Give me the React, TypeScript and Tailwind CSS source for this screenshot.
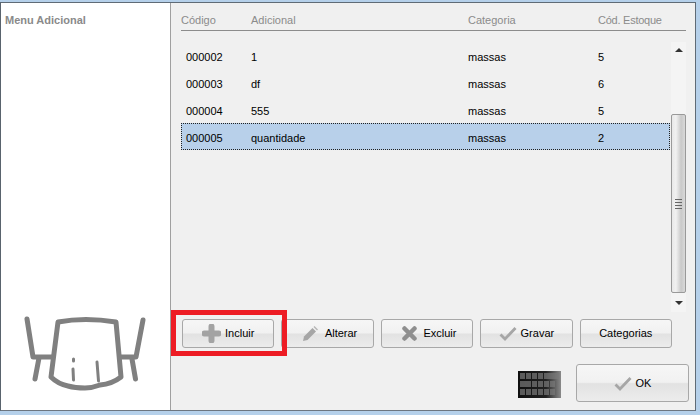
const rows = [
  { code: "000002", name: "1", cat: "massas", stock: "5" },
  { code: "000003", name: "df", cat: "massas", stock: "6" },
  { code: "000004", name: "555", cat: "massas", stock: "5" },
  { code: "000005", name: "quantidade", cat: "massas", stock: "2", selected: true },
];

const cols = "grid grid-cols-[70px_217px_130px_1fr] items-center";
const btn =
  "flex items-center justify-center h-[29px] w-[92.4px] rounded-[3px] border border-[#a8a8a8] text-[11px] text-black bg-[linear-gradient(to_bottom,#f6f6f6_0%,#f1f1f1_48%,#e2e2e2_52%,#ececec_100%)]";

function PlusIcon() {
  return (
    <svg width="19" height="19" viewBox="0 0 19 19" className="mr-[4px]">
      <path d="M9.500 2.500v14M2.500 9.500h14" stroke="#a3a3a3" strokeWidth="6" strokeLinecap="round" />
    </svg>
  );
}

function PencilIcon() {
  return (
    <svg width="16" height="16" viewBox="0 0 16 16" className="mr-[7px]">
      <path d="M1 15l1-4.500 8.500-8.500 3.500 3.500-8.500 8.500z" fill="#a6a6a6" />
      <path d="M11.500 1l1-1 3.500 3.500-1 1z" fill="#b5b5b5" />
    </svg>
  );
}

function CrossIcon() {
  return (
    <svg width="15" height="15" viewBox="0 0 15 15" className="mr-[6px]">
      <path d="M2.500 2.500l10 10M12.500 2.500l-10 10" stroke="#8f8f8f" strokeWidth="4.500" strokeLinecap="round" />
    </svg>
  );
}

function CheckIcon() {
  return (
    <svg width="18" height="15" viewBox="0 0 18 15" className="mr-[4px]">
      <path d="M1.500 8.500l4.500 4.500 10.500-11" fill="none" stroke="#a6a6a6" strokeWidth="2.800" />
    </svg>
  );
}

function TableIcon() {
  return (
    <svg width="123" height="78" viewBox="24 315 123 78" fill="none" stroke="#808080" strokeWidth="5" strokeLinecap="round" strokeLinejoin="round" className="block">
      <path d="M27 319l6 38h19M39 358l-4 21" />
      <path d="M143 320l-7 37h-16M132 359l3.500 20" />
      <path d="M58 322q27-5 58 0l5 55Q112 384 100 385Q92 388 85 388Q75 388 68 386Q58 384 51 377z" />
      <path d="M73.500 359v2M73 369l.5 11M97 362l1.500 19" strokeWidth="3" />
    </svg>
  );
}

function KeyboardIcon() {
  const keys: [number, number, number][] = [
    [2, 2, 5], [8, 2, 5], [14, 2, 5], [20, 2, 5], [26, 2, 15],
    [2, 10, 11], [14, 10, 5], [20, 10, 5], [26, 10, 5], [32, 10, 5],
    [2, 18, 5], [8, 18, 5], [14, 18, 5], [20, 18, 5], [26, 18, 5], [32, 18, 5],
  ];
  return (
    <svg width="43" height="27" viewBox="0 0 43 27" className="mr-[15px] mt-[7px]">
      <defs>
        <linearGradient id="kb" x1="0" x2="1" y1="0" y2="0">
          <stop offset="0" stopColor="#0f0f0f" />
          <stop offset="0.65" stopColor="#222" />
          <stop offset="1" stopColor="#8a8a8a" />
        </linearGradient>
      </defs>
      <rect width="43" height="27" fill="url(#kb)" />
      {keys.map(([x, y, w]) => (
        <rect key={`${x}-${y}`} x={x} y={y} width={w} height="6" fill="#7a7a7a" opacity={0.7} />
      ))}
    </svg>
  );
}

function Scrollbar() {
  return (
    <div className="flex flex-col items-center w-[15px] h-[270px] bg-[#f4f4f4]">
      <div className="h-[15px] flex items-center justify-center">
        <div className="w-0 h-0 border-x-[4px] border-x-transparent border-b-[4px] border-b-[#333]" />
      </div>
      <div className="mt-[57px] w-[15px] h-[179px] rounded-[2px] border border-[#999] flex flex-col items-center justify-center gap-[2px] bg-[linear-gradient(to_right,#e8e8e8,#f1f1f1_30%,#c9c9c9_70%,#d9d9d9)]">
        <div className="w-[7px] h-px bg-[#666]" />
        <div className="w-[7px] h-px bg-[#666]" />
        <div className="w-[7px] h-px bg-[#666]" />
        <div className="w-[7px] h-px bg-[#666]" />
      </div>
      <div className="h-[19px] flex items-center justify-center">
        <div className="w-0 h-0 border-x-[4px] border-x-transparent border-t-[4px] border-t-[#333]" />
      </div>
    </div>
  );
}

export default function App() {
  return (
    <div className="w-[700px] h-[415px] overflow-hidden bg-[#b5d0ea] pt-[2px] pb-[4px] pr-[4px] font-['Liberation_Sans',sans-serif]">
      <div className="flex h-full border border-[#5f6b76] border-b-[#6d7680] border-l-[#59636d]">
        {/* left panel */}
        <div className="w-[170px] shrink-0 bg-white border-r border-[#a0a0a0] flex flex-col items-center">
          <div className="self-start pl-[4px] pt-[9px] text-[11px] font-bold text-[#8a8a8a]">Menu Adicional</div>
          <div className="mt-auto mb-[17px]">
            <TableIcon />
          </div>
        </div>

        {/* content */}
        <div className="relative flex-1 bg-[#f0f0f0] pl-[10px] pr-[9px]">
          <div className={`${cols} h-[28px] pt-[7px] text-[11px] text-[#8b8b8b] border-b border-[#8c8c8c]`}>
            <span>Código</span>
            <span>Adicional</span>
            <span>Categoria</span>
            <span className="tracking-[-0.25px]">Cód. Estoque</span>
          </div>

          <div className="flex mt-[11px]">
            <div className="w-[489px] mr-[1px] shrink-0">
              {rows.map((r) => (
                <div
                  key={r.code}
                  className={`${cols} h-[27px] pt-[4px] text-[11px] text-black ${r.selected ? "bg-[#b8d0ea] outline-1 outline-dotted -outline-offset-1 outline-[#222]" : ""}`}
                >
                  <span className="pl-[5px]">{r.code}</span>
                  <span>{r.name}</span>
                  <span>{r.cat}</span>
                  <span>{r.stock}</span>
                </div>
              ))}
            </div>
            <Scrollbar />
          </div>

          <div className="flex gap-[7px] mt-[7px] ml-[1px]">
            <button className={`${btn} border-[#8a8a8a]`}><PlusIcon />Incluir</button>
            <button className={`${btn} pl-[4px]`}><PencilIcon />Alterar</button>
            <button className={`${btn} pl-[5px]`}><CrossIcon />Excluir</button>
            <button className={btn}><CheckIcon />Gravar</button>
            <button className={btn}>Categorias</button>
          </div>

          <div className="flex justify-end mt-[16px] -mr-[3px]">
            <KeyboardIcon />
            <button className={`${btn} w-[113px] h-[38px]`}><CheckIcon />OK</button>
          </div>

          {/* red highlight around Incluir */}
          <div className="absolute left-0 top-[307px] w-[116px] h-[46px] border-[5px] border-[#ed1c24] pointer-events-none" />
        </div>
      </div>
    </div>
  );
}
